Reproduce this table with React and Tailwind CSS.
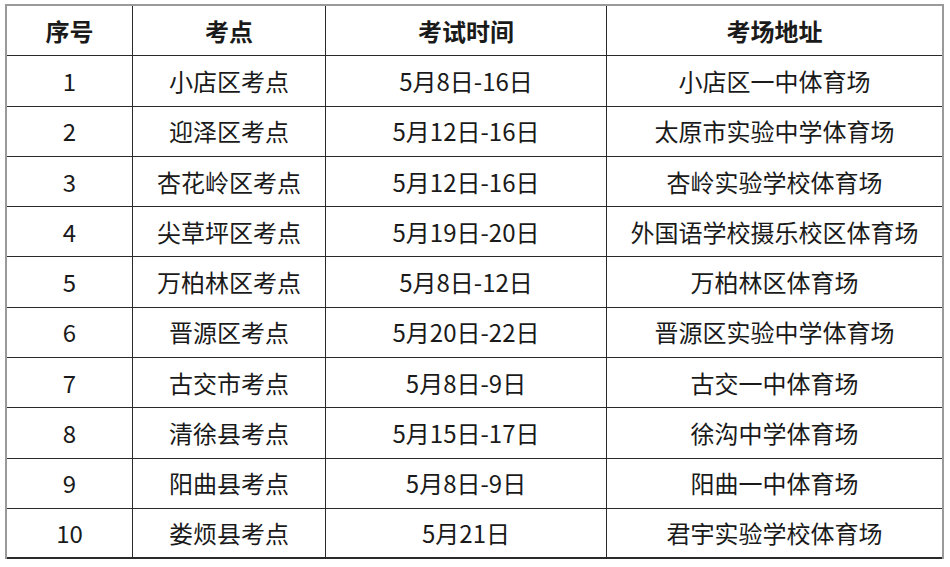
import React from "react";

const rows = [
  ["1", "小店区考点", "5月8日-16日", "小店区一中体育场"],
  ["2", "迎泽区考点", "5月12日-16日", "太原市实验中学体育场"],
  ["3", "杏花岭区考点", "5月12日-16日", "杏岭实验学校体育场"],
  ["4", "尖草坪区考点", "5月19日-20日", "外国语学校摄乐校区体育场"],
  ["5", "万柏林区考点", "5月8日-12日", "万柏林区体育场"],
  ["6", "晋源区考点", "5月20日-22日", "晋源区实验中学体育场"],
  ["7", "古交市考点", "5月8日-9日", "古交一中体育场"],
  ["8", "清徐县考点", "5月15日-17日", "徐沟中学体育场"],
  ["9", "阳曲县考点", "5月8日-9日", "阳曲一中体育场"],
  ["10", "娄烦县考点", "5月21日", "君宇实验学校体育场"],
];

function Row({ cells, last }) {
  return (
    <div className={`flex h-[50.3px] ${last ? "border-b-2 border-[#2a2a2a]" : "border-b border-[#2a2a2a]"}`}>
      <div className="w-[126px] border-r border-[#2a2a2a] flex items-center justify-center">{cells[0]}</div>
      <div className="w-[193px] border-r border-[#2a2a2a] flex items-center justify-center">{cells[1]}</div>
      <div className="w-[281px] border-r border-[#2a2a2a] flex items-center justify-center">{cells[2]}</div>
      <div className="flex-1 flex items-center justify-center">{cells[3]}</div>
    </div>
  );
}

export default function App() {
  return (
    <div
      className="w-[950px] h-[567px] bg-white overflow-hidden pt-[4px] pl-[5px] text-[#1a1a1a] text-[24px] leading-none"
      style={{ fontFamily: '"Noto Sans CJK SC", "Noto Sans", sans-serif' }}
    >
      <div className="w-[939px] border-l-2 border-t-2 border-r-2 border-[#9a9a9a]">
        <div className="font-bold">
          <Row cells={["序号", "考点", "考试时间", "考场地址"]} />
        </div>
        {rows.map((r, i) => (
          <Row key={i} cells={r} last={i === rows.length - 1} />
        ))}
      </div>
    </div>
  );
}
